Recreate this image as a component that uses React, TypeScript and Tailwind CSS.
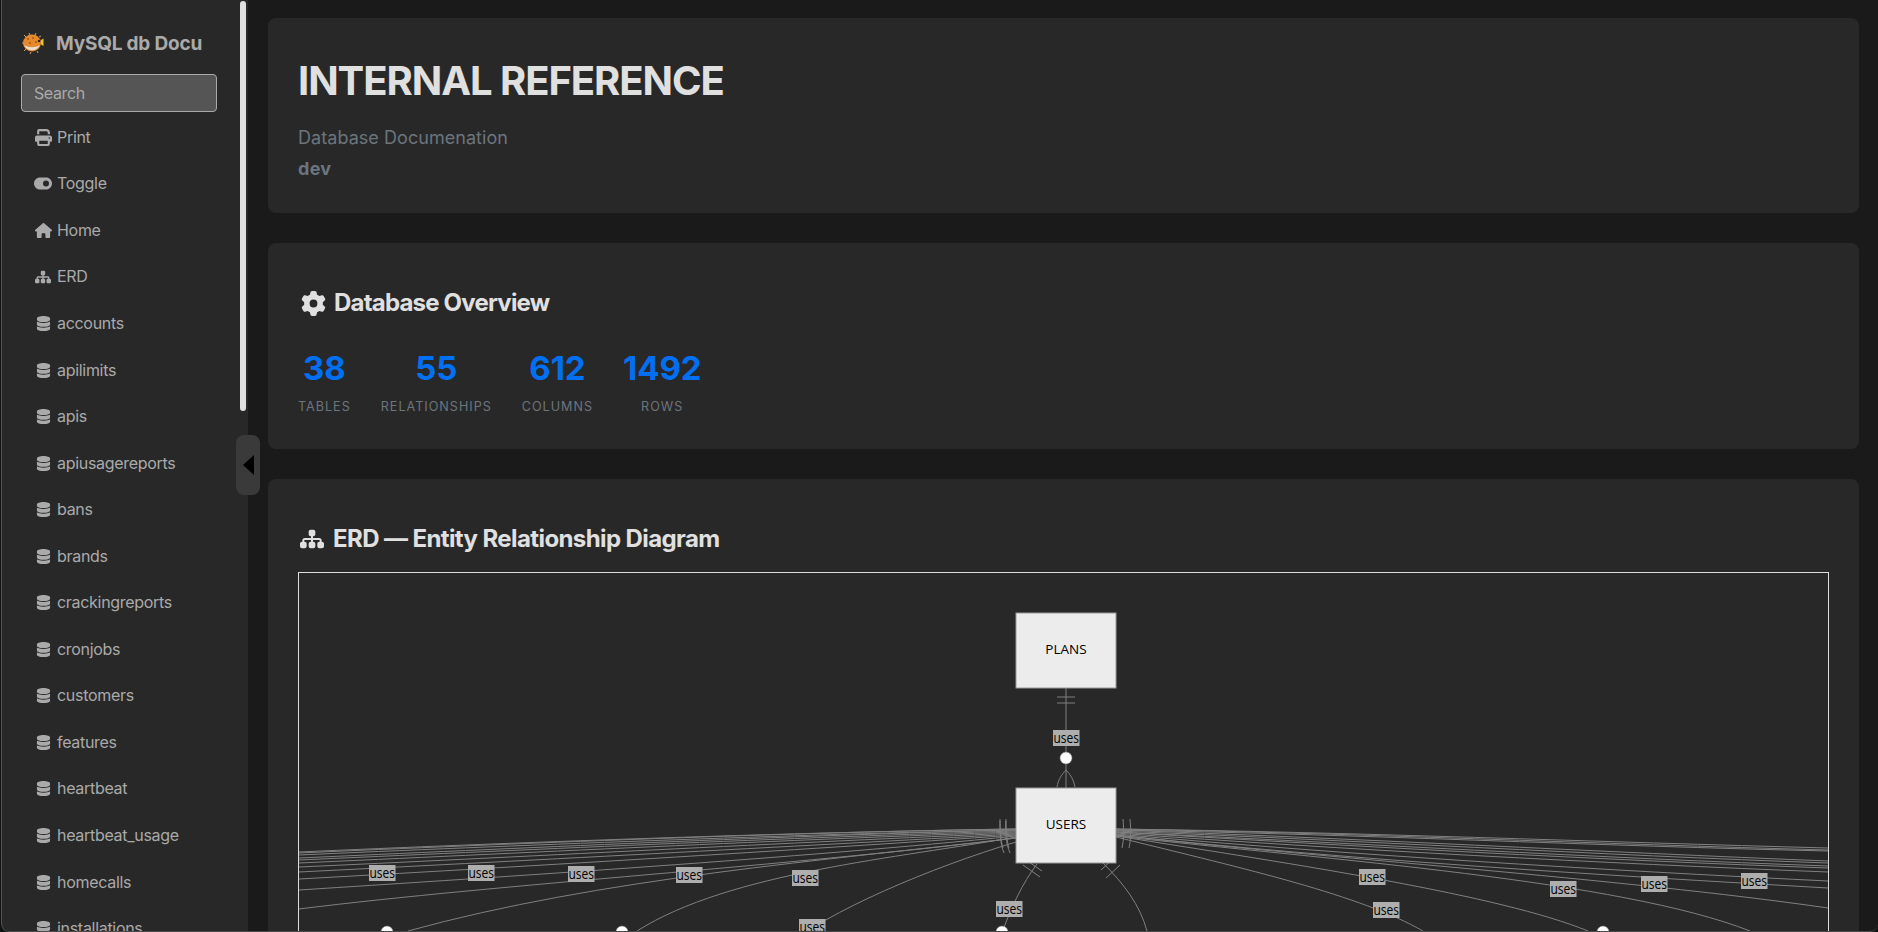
import { FaGear, FaDatabase, FaHouse, FaPrint, FaSitemap, FaToggleOn } from "react-icons/fa6";

const tables = [
  "accounts",
  "apilimits",
  "apis",
  "apiusagereports",
  "bans",
  "brands",
  "crackingreports",
  "cronjobs",
  "customers",
  "features",
  "heartbeat",
  "heartbeat_usage",
  "homecalls",
  "installations",
];

const stats = [
  { value: "38", label: "Tables" },
  { value: "55", label: "Relationships" },
  { value: "612", label: "Columns" },
  { value: "1492", label: "Rows" },
];

// relationship lines, in page coordinates
const edges = [
  // left fan
  "M1016 829 C800 832 500 843 299 852",
  "M1016 829 C800 832 500 844 299 853",
  "M1016 830 C800 834 500 846 299 855",
  "M1016 830 C800 835 500 849 299 858",
  "M1016 831 C800 837 500 851 299 860",
  "M1016 832 C800 839 500 854 299 863",
  "M1016 833 C800 842 500 858 299 867",
  "M1016 834 C800 846 500 862 299 872",
  "M1016 835 C800 850 500 868 299 879",
  "M1016 836 C800 858 500 877 299 890",
  "M1016 838 C790 866 500 884 299 909",
  "M1016 838 C830 860 600 878 408 931",
  "M1016 837 C900 858 730 872 637 931",
  "M1016 842 C930 868 830 910 780 950",
  // right fan
  "M1116 829 C1350 832 1600 842 1828 848",
  "M1116 829 C1350 833 1600 844 1828 850",
  "M1116 830 C1350 834 1600 846 1828 851",
  "M1116 830 C1350 838 1600 852 1828 861",
  "M1116 831 C1350 840 1600 855 1828 863",
  "M1116 832 C1350 843 1600 858 1828 866",
  "M1116 832 C1350 846 1600 860 1828 868",
  "M1116 833 C1350 850 1600 863 1828 872",
  "M1116 834 C1350 855 1600 870 1828 881",
  "M1116 835 C1350 860 1600 875 1828 888",
  "M1116 835 C1320 858 1620 878 1828 908",
  "M1116 836 C1330 860 1620 880 1750 931",
  "M1116 836 C1300 865 1500 895 1588 931",
  "M1116 837 C1250 870 1360 895 1423 931",
  // bottom
  "M1037 864 C1022 884 1012 906 1003 930",
  "M1103 863 C1124 884 1140 905 1147 931",
  // plans to users
  "M1066 688 V788",
];

const ticks = [
  "M1057 697 H1075",
  "M1057 703 H1075",
  "M1057 787 C1058 780 1062 774 1066 770 C1070 774 1074 780 1075 787",
  "M1000 819 C1000 832 1000 844 1004 853",
  "M1006 819 C1005 832 1006 844 1010 853",
  "M1000 821 C1000 832 1001 842 1003 848",
  "M1006 821 C1006 832 1007 842 1009 848",
  "M1123 819 C1124 830 1124 840 1122 848",
  "M1130 819 C1131 830 1131 840 1129 848",
  "M1023 865 L1040 877",
  "M1026 860 L1042 871",
  "M1101 870 L1115 857",
  "M1106 878 L1120 865",
];

const labels = [
  { x: 369, y: 865 },
  { x: 468, y: 865 },
  { x: 568, y: 866 },
  { x: 676, y: 867 },
  { x: 792, y: 870 },
  { x: 799, y: 919 },
  { x: 996, y: 901 },
  { x: 1053, y: 730 },
  { x: 1359, y: 869 },
  { x: 1373, y: 902 },
  { x: 1550, y: 881 },
  { x: 1641, y: 876 },
  { x: 1741, y: 873 },
];

const circles = [
  { x: 1066, y: 758 },
  { x: 387, y: 932 },
  { x: 622, y: 932 },
  { x: 1002, y: 932 },
  { x: 1603, y: 932 },
];

const Blowfish = () => (
  <svg viewBox="0 0 22 22" className="w-[22px] h-[22px] shrink-0">
    <g stroke="#c9a27a" strokeWidth="1">
      <path d="M4 5 L2 3 M8 3 L7 1 M13 3 L14 1 M17 5 L19 4 M2 11 L0 11 M4 17 L2 19 M9 20 L8 22 M15 19 L16 21" />
    </g>
    <ellipse cx="10" cy="11" rx="9" ry="8.5" fill="#e58a2c" />
    <path d="M2 13 C5 20 15 20 18 13 C13 16 7 16 2 13 Z" fill="#e8dfd2" />
    <circle cx="6" cy="7" r="1" fill="#a9551a" />
    <circle cx="11" cy="6" r="1" fill="#a9551a" />
    <circle cx="14" cy="10" r="1" fill="#a9551a" />
    <circle cx="8" cy="11" r="1" fill="#a9551a" />
    <path d="M19 8 L21.5 6.5 V14 L19 12.5 Z" fill="#e6c62e" />
    <circle cx="17" cy="9" r="1.2" fill="#222" />
  </svg>
);

const NavItem = ({ icon, label }: { icon: any; label: string }) => (
  <div className="h-[46.55px] flex items-center pl-[32px] text-base tracking-[-0.3px] text-[#aaaaaa]">
    <span className="w-[18px] flex justify-center shrink-0 text-[17px]">{icon}</span>
    <span className="ml-[5px] -mt-px">{label}</span>
  </div>
);

const Sidebar = () => (
  <div className="relative w-[247px] h-full shrink-0 bg-[#282828] border-l border-[#555555] rounded-bl-lg">
    <div className="h-full overflow-hidden rounded-bl-lg">
      <div className="flex items-center h-[74px] pl-[20px] pt-[12px]">
        <Blowfish />
        <span className="ml-[12px] mt-[2px] text-[19px] tracking-[-0.2px] font-bold text-[#aaaaaa]">MySQL db Docu</span>
      </div>
      <div className="ml-[19px] w-[196px] h-[38px] flex items-center px-[12px] pb-px bg-[#555555] border border-[#aaaaaa] rounded text-base tracking-[-0.4px] text-[#aaaaaa]">
        Search
      </div>
      <div className="mt-[2px]">
        <NavItem icon={<FaPrint />} label="Print" />
        <NavItem icon={<FaToggleOn className="text-[19px]" />} label="Toggle" />
        <NavItem icon={<FaHouse className="text-[17px]" />} label="Home" />
        <NavItem icon={<FaSitemap className="text-[16px]" />} label="ERD" />
        {tables.map((t) => (
          <NavItem key={t} icon={<FaDatabase className="text-[15px]" />} label={t} />
        ))}
      </div>
    </div>
    {/* scrollbar thumb */}
    <div className="absolute top-px left-[238px] w-[6px] h-[410px] rounded-full bg-[#e0e0e0]" />
    {/* collapse handle */}
    <div className="absolute top-[435px] left-[234px] w-[24px] h-[60px] rounded-lg bg-[#3a3a3a] flex items-center justify-center z-10">
      <svg viewBox="0 0 11 20" className="w-[11px] h-[20px]">
        <path d="M0 10 L11 0 V20 Z" fill="#000" />
      </svg>
    </div>
  </div>
);

const ErdDiagram = () => (
  <div className="border border-[#dddddd] border-b-0 h-[400px] overflow-hidden">
    <svg viewBox="299 573 1529 400" className="w-full h-[400px] block">
      <g fill="none" stroke="#808080" strokeWidth="1">
        {edges.map((d, i) => (
          <path key={i} d={d} />
        ))}
        {ticks.map((d, i) => (
          <path key={i} d={d} />
        ))}
      </g>
      {circles.map((c, i) => (
        <circle key={i} cx={c.x} cy={c.y} r="6" fill="#ffffff" stroke="#808080" strokeWidth="0.5" />
      ))}
      <rect x="1016" y="613" width="100" height="75" fill="#ececec" stroke="#999999" />
      <text x="1066" y="654" textAnchor="middle" fontSize="13.5" fill="#000" fontFamily="'Open Sans', sans-serif">
        PLANS
      </text>
      <rect x="1016" y="788" width="100" height="75" fill="#ececec" stroke="#999999" />
      <text x="1066" y="828.5" textAnchor="middle" fontSize="13.5" fill="#000" fontFamily="'Open Sans', sans-serif">
        USERS
      </text>
      {labels.map((l, i) => (
        <g key={i}>
          <rect x={l.x} y={l.y} width="26.5" height="16" fill="#aeaeae" />
          <text
            x={l.x + 13.25}
            y={l.y + 12.5}
            textAnchor="middle"
            fontSize="14"
            fill="#000"
            fontFamily="'Open Sans', sans-serif"
            textLength={25.5}
            lengthAdjust="spacingAndGlyphs"
          >
            uses
          </text>
        </g>
      ))}
    </svg>
  </div>
);

const App = () => {
  return (
    <div className="h-screen w-full bg-[#0f1412]">
      <div className="h-full flex ml-px overflow-hidden bg-[#1a1a1a] border-b border-[#4a4a4a] rounded-b-lg font-['Inter',sans-serif]">
        <Sidebar />
        <div className="flex-1 min-w-0 flex flex-col gap-[30px] pt-[18px] pl-[20px] pr-[19px]">
          <div className="bg-[#282828] rounded-lg h-[195px] px-[30px] pt-[39px] shrink-0">
            <h1 className="text-[40px] leading-[48px] font-bold tracking-[-1.05px] text-[#e0e0e0]">INTERNAL REFERENCE</h1>
            <p className="mt-[19px] text-lg leading-[27px] tracking-[0.05px] text-[#6c757d]">Database Documenation</p>
            <p className="mt-[4px] text-lg leading-[27px] font-bold tracking-[0.3px] text-[#6c757d]">dev</p>
          </div>

          <div className="bg-[#282828] rounded-lg h-[206px] px-[30px] pt-[42px] shrink-0">
            <h2 className="flex items-center text-2xl leading-[36px] font-bold tracking-[-0.8px] text-[#e0e0e0]">
              <FaGear className="ml-[3px] mr-[8px] text-[25px]" />
              Database Overview
            </h2>
            <div className="flex gap-[30px] mt-[28px]">
              {stats.map((s) => (
                <div key={s.label} className="flex flex-col items-center">
                  <span className="text-[33px] leading-[38px] font-bold tracking-[-0.1px] text-[#0070f3]">{s.value}</span>
                  <span className="mt-[11px] text-[12.6px] leading-[18px] tracking-[1px] uppercase text-[#6c757d]">
                    {s.label}
                  </span>
                </div>
              ))}
            </div>
          </div>

          <div className="bg-[#282828] rounded-lg px-[30px] pt-[42px] shrink-0 h-[600px]">
            <h2 className="flex items-center text-2xl leading-[36px] font-bold tracking-[-0.6px] text-[#e0e0e0]">
              <FaSitemap className="ml-[2px] mr-[9px] text-[24px]" />
              ERD — Entity Relationship Diagram
            </h2>
            <div className="mt-[15px]">
              <ErdDiagram />
            </div>
          </div>
        </div>
      </div>
    </div>
  );
};

export default App;
